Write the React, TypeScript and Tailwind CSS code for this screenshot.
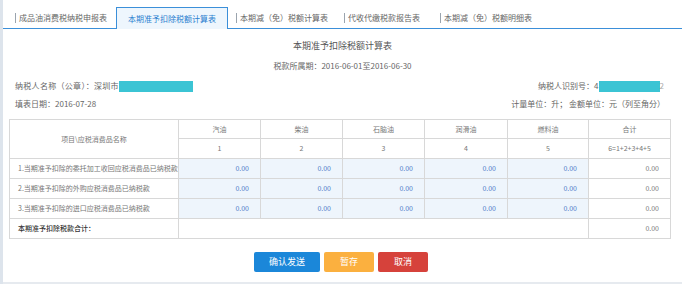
const font = { fontFamily: '"Noto Sans CJK SC", "Noto Sans", sans-serif' };

const tabs = [
  { label: "成品油消费税纳税申报表", w: "w-[104px]", pl: "pl-[3px]" },
  { label: "本期准予扣除税额计算表", active: true },
  { label: "本期减（免）税额计算表", w: "w-[112px]", pl: "pl-[8px]" },
  { label: "代收代缴税款报告表", w: "w-[96px]", pl: "pl-[4px]" },
  { label: "本期减（免）税额明细表", w: "w-[120px]", pl: "pl-[4px]" },
];

const fuels = ["汽油", "柴油", "石脑油", "润滑油", "燃料油"];

const rows = [
  "1.当期准予扣除的委托加工收回应税消费品已纳税款",
  "2.当期准予扣除的外购应税消费品已纳税款",
  "3.当期准予扣除的进口应税消费品已纳税款",
];

function TabBar() {
  return (
    <div className="flex items-end h-[29px] pl-[9px] border-b border-[#3b8fd9]">
      {tabs.map((t) =>
        t.active ? (
          <div
            key={t.label}
            className="w-[112px] h-[22px] -mb-px flex items-center justify-center bg-[#eef6fd] border border-b-0 border-[#3b8fd9] text-[8px] text-[#2b7fd0]"
          >
            {t.label}
          </div>
        ) : (
          <div key={t.label} className={`${t.w} ${t.pl} h-[21px] flex items-center gap-[3px] text-[8px] text-[#666]`}>
            <span className="w-px h-[10px] bg-[#9aa4ae]" />
            <span>{t.label}</span>
          </div>
        )
      )}
    </div>
  );
}

function Masked({ w }: { w: string }) {
  return <span className={`inline-block ${w} h-[11px] bg-[#3bc4d4]`} />;
}

export default function App() {
  return (
    <div className="flex w-[682px] h-[284px] bg-white overflow-hidden" style={font}>
      <div className="w-[3px] bg-[#dde4ec]" />
      <div className="flex-1 flex flex-col">
        <TabBar />

        <div className="mt-[9px] h-[16px] flex items-center justify-center text-[9px] text-[#555]">
          本期准予扣除税额计算表
        </div>
        <div className="mt-[4px] h-[16px] flex items-center justify-center text-[8px] text-[#666]">
          税款所属期：2016-06-01至2016-06-30
        </div>

        <div className="mt-[4px] h-[16px] pl-[12px] pr-[18px] flex items-center justify-between text-[8px] text-[#666]">
          <div className="flex items-center">
            <span className="tracking-[0.3px]">纳税人名称（公章）：深圳市</span>
            <Masked w="w-[74px]" />
          </div>
          <div className="flex items-center">
            纳税人识别号：4
            <Masked w="w-[61px]" />
            <span className="text-[#aaa]">2</span>
          </div>
        </div>

        <div className="mt-[2px] h-[16px] pl-[12px] pr-[17px] flex items-center justify-between text-[8px] text-[#666]">
          <div>填表日期：2016-07-28</div>
          <div>计量单位：升； 金额单位：元（列至角分）</div>
        </div>

        <div className="mt-[7px] ml-[6px] mr-[11px]">
          <table className="w-full border-collapse border border-[#c4c4c4] text-[7px] text-[#777] table-fixed">
            <colgroup>
              <col className="w-[169px]" />
              <col className="w-[82px]" />
              <col className="w-[82px]" />
              <col className="w-[82px]" />
              <col className="w-[83px]" />
              <col className="w-[81px]" />
              <col />
            </colgroup>
            <tbody>
              <tr className="h-[19px]">
                <td rowSpan={2} className="border border-[#d8d8d8] text-center">
                  项目\应税消费品名称
                </td>
                {fuels.map((f) => (
                  <td key={f} className="border border-[#d8d8d8] text-center">
                    {f}
                  </td>
                ))}
                <td className="border border-[#d8d8d8] text-center">合计</td>
              </tr>
              <tr className="h-[20px]">
                {[1, 2, 3, 4, 5].map((n) => (
                  <td key={n} className="border border-[#d8d8d8] text-center">
                    {n}
                  </td>
                ))}
                <td className="border border-[#d8d8d8] text-center">6=1+2+3+4+5</td>
              </tr>
              {rows.map((r) => (
                <tr key={r} className="h-[20px]">
                  <td className="border border-[#d8d8d8] pl-[8px] whitespace-nowrap overflow-hidden">{r}</td>
                  {fuels.map((f) => (
                    <td key={f} className="border border-[#d8d8d8] bg-[#eef5fc] text-right pr-[11px] text-[#4a78c8]">
                      0.00
                    </td>
                  ))}
                  <td className="border border-[#d8d8d8] text-right pr-[11px]">0.00</td>
                </tr>
              ))}
              <tr className="h-[20px]">
                <td className="border border-[#d8d8d8] pl-[8px] text-[#333] font-medium">本期准予扣除税款合计：</td>
                <td colSpan={5} className="border border-[#d8d8d8]" />
                <td className="border border-[#d8d8d8] text-right pr-[11px]">0.00</td>
              </tr>
            </tbody>
          </table>
        </div>

        <div className="mt-[13px] flex justify-center gap-[4px] pr-[3px] text-[9px] text-white">
          <button className="w-[66px] h-[20px] rounded-[2px] bg-[#1b87d9]">确认发送</button>
          <button className="w-[50px] h-[20px] rounded-[2px] bg-[#fbb03f]">暂存</button>
          <button className="w-[50px] h-[20px] rounded-[2px] bg-[#d6423b]">取消</button>
        </div>

        <div className="flex-1" />
        <div className="h-[2px] bg-[#e6eaef]" />
      </div>
    </div>
  );
}
